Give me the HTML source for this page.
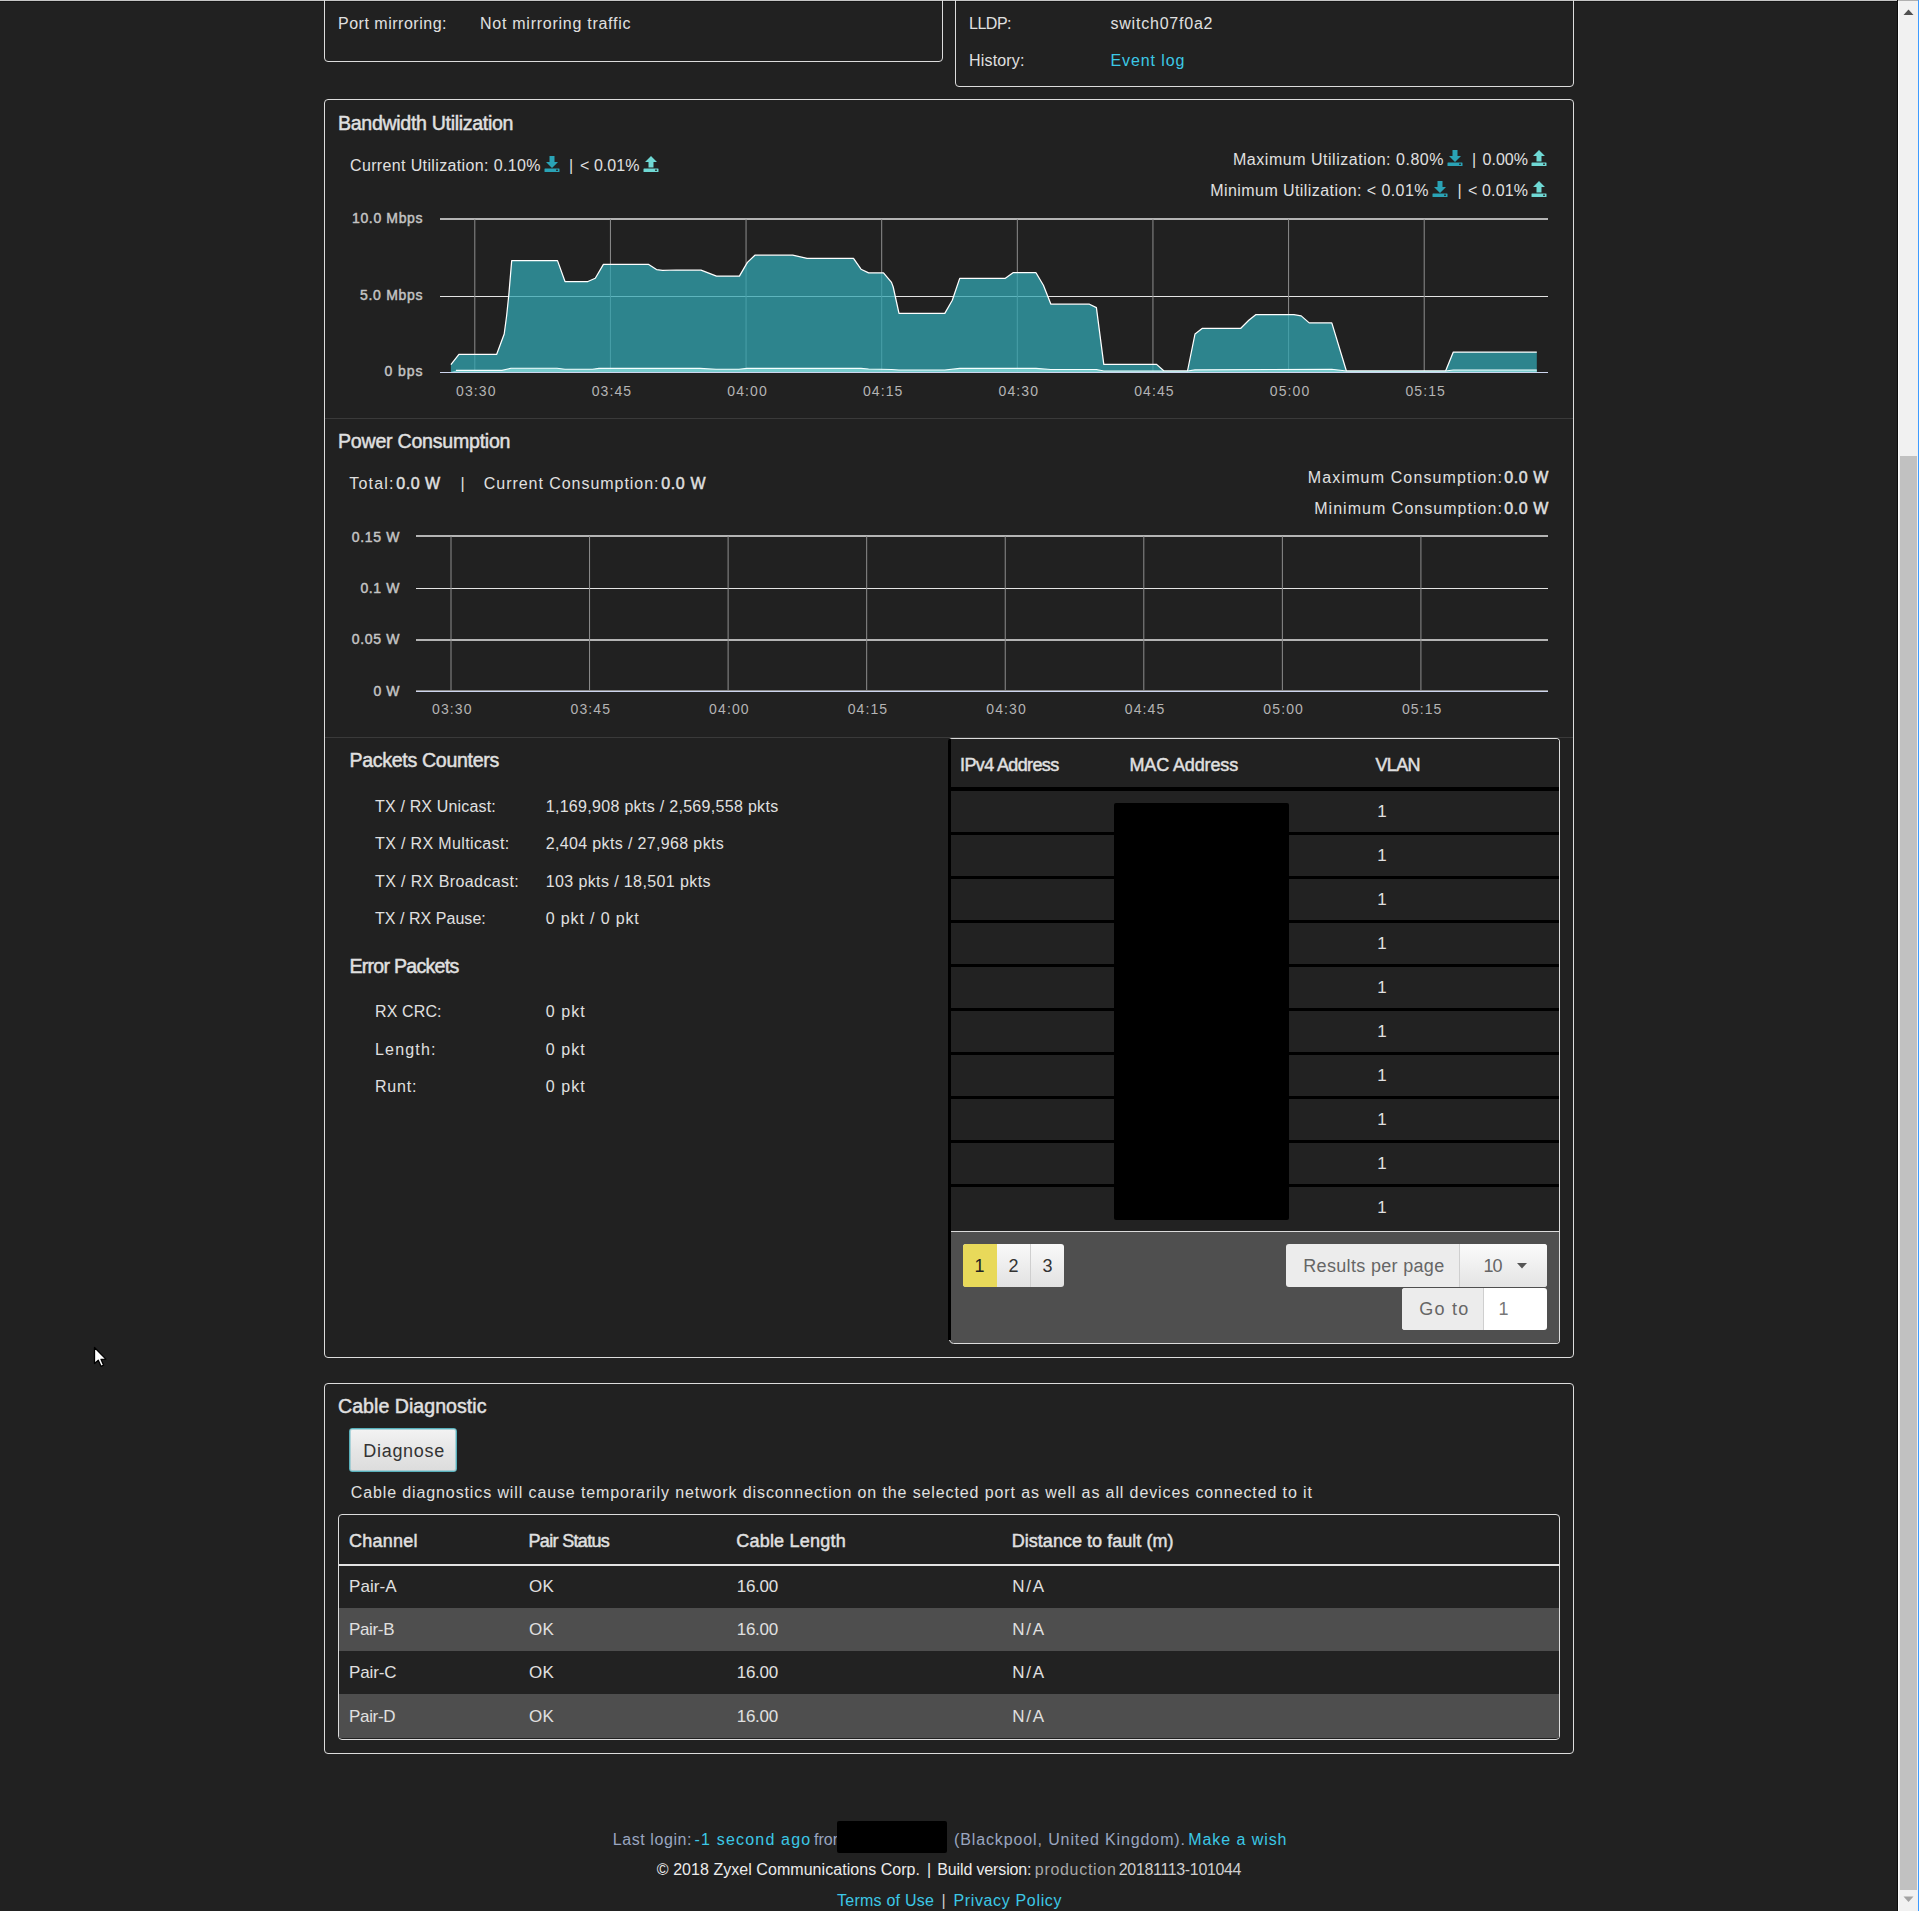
<!DOCTYPE html>
<html><head><meta charset="utf-8"><title>Port Details</title>
<style>
html,body{margin:0;padding:0;}
body{width:1919px;height:1911px;overflow:hidden;background:#212121;position:relative;font-family:"Liberation Sans",sans-serif;}
.abs{position:absolute;}
.t{position:absolute;white-space:pre;line-height:1;}
.panel{position:absolute;box-sizing:border-box;border:1px solid #dcdcdc;border-radius:4px;}
</style></head><body>
<div class=abs style="left:0;top:0;width:1898px;height:1px;background:#c6c6c6"></div>
<div class=abs style="left:0;top:1px;width:1898px;height:1px;background:#161616"></div>
<div class=panel style="left:324px;top:-40px;width:619px;height:102px"></div>
<div class=panel style="left:955px;top:-40px;width:619px;height:127px"></div>
<div class=panel style="left:324px;top:99px;width:1250px;height:1259px"></div>
<div class=abs style="left:325px;top:418px;width:1248px;height:1px;background:#3a3a3a"></div>
<div class=abs style="left:325px;top:737px;width:1248px;height:1px;background:#3a3a3a"></div>
<svg class=abs style="left:0;top:0" width="1919" height="740" viewBox="0 0 1919 740">
<rect x="440" y="218" width="1108" height="2" fill="#b4b4b4"/>
<rect x="440" y="296" width="1108" height="1" fill="#e4e4e4"/>
<g stroke="#8e8e8e" stroke-width="1">
<line x1="474.80" y1="219" x2="474.80" y2="372"/><line x1="610.43" y1="219" x2="610.43" y2="372"/><line x1="746.06" y1="219" x2="746.06" y2="372"/><line x1="881.69" y1="219" x2="881.69" y2="372"/><line x1="1017.32" y1="219" x2="1017.32" y2="372"/><line x1="1152.95" y1="219" x2="1152.95" y2="372"/><line x1="1288.58" y1="219" x2="1288.58" y2="372"/><line x1="1424.21" y1="219" x2="1424.21" y2="372"/>
</g>
<path d="M450.9,372.0 L450.9,364.6 L458.9,354.3 L496.7,354.3 L504.2,334.0 L506.6,316.0 L508.8,295.0 L511.7,260.6 L557.5,260.6 L565.0,281.5 L587.9,281.5 L595.3,278.2 L603.4,264.4 L648.7,264.4 L656.5,269.6 L662.6,270.4 L676.4,270.0 L701.0,270.2 L716.5,276.1 L739.4,276.1 L747.4,262.4 L754.9,255.2 L792.7,255.2 L807.1,258.3 L853.5,258.3 L861.0,269.2 L868.6,272.9 L883.5,272.9 L891.5,282.4 L893.2,287.0 L899.0,313.4 L944.8,313.4 L952.3,300.2 L959.7,278.4 L1005.0,278.4 L1013.0,272.7 L1036.0,272.7 L1043.4,285.3 L1050.9,304.2 L1089.5,304.2 L1096.4,307.6 L1103.8,364.4 L1156.6,364.4 L1164.0,371.0 L1187.5,371.0 L1195.0,334.0 L1202.4,328.3 L1240.8,328.3 L1248.8,320.3 L1255.7,314.7 L1293.9,314.7 L1301.2,315.9 L1309.2,322.9 L1331.8,322.9 L1346.4,371.0 L1445.6,371.0 L1453.3,352.0 L1536.8,352.0 L1536.8,372.0 Z" fill="#31a5b1" fill-opacity="0.75"/>
<path d="M450.9,364.6 L458.9,354.3 L496.7,354.3 L504.2,334.0 L506.6,316.0 L508.8,295.0 L511.7,260.6 L557.5,260.6 L565.0,281.5 L587.9,281.5 L595.3,278.2 L603.4,264.4 L648.7,264.4 L656.5,269.6 L662.6,270.4 L676.4,270.0 L701.0,270.2 L716.5,276.1 L739.4,276.1 L747.4,262.4 L754.9,255.2 L792.7,255.2 L807.1,258.3 L853.5,258.3 L861.0,269.2 L868.6,272.9 L883.5,272.9 L891.5,282.4 L893.2,287.0 L899.0,313.4 L944.8,313.4 L952.3,300.2 L959.7,278.4 L1005.0,278.4 L1013.0,272.7 L1036.0,272.7 L1043.4,285.3 L1050.9,304.2 L1089.5,304.2 L1096.4,307.6 L1103.8,364.4 L1156.6,364.4 L1164.0,371.0 L1187.5,371.0 L1195.0,334.0 L1202.4,328.3 L1240.8,328.3 L1248.8,320.3 L1255.7,314.7 L1293.9,314.7 L1301.2,315.9 L1309.2,322.9 L1331.8,322.9 L1346.4,371.0 L1445.6,371.0 L1453.3,352.0 L1536.8,352.0" fill="none" stroke="#ffffff" stroke-width="1.25" stroke-linejoin="round"/>
<path d="M450.9,372.0 L456.0,370.4 L502.0,370.4 L511.0,368.2 L557.0,368.2 L565.0,369.2 L592.5,369.2 L599.0,368.4 L700.0,368.4 L716.0,369.2 L739.0,369.2 L747.0,368.4 L861.0,368.4 L868.6,369.0 L891.5,369.5 L899.0,370.0 L944.8,370.0 L959.7,368.4 L1036.0,368.4 L1050.9,369.5 L1096.4,369.5 L1103.8,371.0 L1187.5,371.0 L1195.0,369.9 L1331.8,369.3 L1346.4,371.0 L1445.6,371.0 L1453.3,370.0 L1536.8,370.0 L1536.8,372.0 Z" fill="#7fd3d3" fill-opacity="0.9"/>
<path d="M456.0,370.4 L502.0,370.4 L511.0,368.2 L557.0,368.2 L565.0,369.2 L592.5,369.2 L599.0,368.4 L700.0,368.4 L716.0,369.2 L739.0,369.2 L747.0,368.4 L861.0,368.4 L868.6,369.0 L891.5,369.5 L899.0,370.0 L944.8,370.0 L959.7,368.4 L1036.0,368.4 L1050.9,369.5 L1096.4,369.5 L1103.8,371.0 L1187.5,371.0 L1195.0,369.9 L1331.8,369.3 L1346.4,371.0 L1445.6,371.0 L1453.3,370.0 L1536.8,370.0" fill="none" stroke="#f4ffff" stroke-width="1.1"/>
<rect x="440" y="372" width="1108" height="1" fill="#cdd5ee"/>
<rect x="416" y="535" width="1132" height="2" fill="#b4b4b4"/>
<rect x="416" y="588" width="1132" height="1" fill="#e4e4e4"/>
<rect x="416" y="639" width="1132" height="2" fill="#b4b4b4"/>
<g stroke="#8e8e8e" stroke-width="1">
<line x1="451.00" y1="536" x2="451.00" y2="690"/><line x1="589.56" y1="536" x2="589.56" y2="690"/><line x1="728.12" y1="536" x2="728.12" y2="690"/><line x1="866.68" y1="536" x2="866.68" y2="690"/><line x1="1005.24" y1="536" x2="1005.24" y2="690"/><line x1="1143.80" y1="536" x2="1143.80" y2="690"/><line x1="1282.36" y1="536" x2="1282.36" y2="690"/><line x1="1420.92" y1="536" x2="1420.92" y2="690"/>
</g>
<rect x="416" y="690" width="1132" height="1" fill="#8a8a8a"/>
<rect x="416" y="691" width="1132" height="1" fill="#cdd5ee"/>
</svg>
<svg class=abs style="left:544px;top:156px" width="16" height="16" viewBox="0 0 16 16"><path d="M5.5 0 H10.5 V6 H14 L8 12 L2 6 H5.5 Z" fill="#2aa3b6"/><rect x="0.5" y="12.5" width="15" height="3.5" rx="0.5" fill="#2aa3b6"/><rect x="12" y="13.6" width="2" height="1.2" fill="#212121"/></svg><svg class=abs style="left:643px;top:156px" width="16" height="16" viewBox="0 0 16 16"><path d="M8 0 L14 6 H10.5 V11.5 H5.5 V6 H2 Z" fill="#6fd8d4"/><rect x="0.5" y="12.5" width="15" height="3.5" rx="0.5" fill="#6fd8d4"/><rect x="12" y="13.6" width="2" height="1.2" fill="#212121"/></svg><svg class=abs style="left:1447px;top:150px" width="16" height="16" viewBox="0 0 16 16"><path d="M5.5 0 H10.5 V6 H14 L8 12 L2 6 H5.5 Z" fill="#2aa3b6"/><rect x="0.5" y="12.5" width="15" height="3.5" rx="0.5" fill="#2aa3b6"/><rect x="12" y="13.6" width="2" height="1.2" fill="#212121"/></svg><svg class=abs style="left:1531px;top:150px" width="16" height="16" viewBox="0 0 16 16"><path d="M8 0 L14 6 H10.5 V11.5 H5.5 V6 H2 Z" fill="#6fd8d4"/><rect x="0.5" y="12.5" width="15" height="3.5" rx="0.5" fill="#6fd8d4"/><rect x="12" y="13.6" width="2" height="1.2" fill="#212121"/></svg><svg class=abs style="left:1432px;top:181px" width="16" height="16" viewBox="0 0 16 16"><path d="M5.5 0 H10.5 V6 H14 L8 12 L2 6 H5.5 Z" fill="#2aa3b6"/><rect x="0.5" y="12.5" width="15" height="3.5" rx="0.5" fill="#2aa3b6"/><rect x="12" y="13.6" width="2" height="1.2" fill="#212121"/></svg><svg class=abs style="left:1531px;top:181px" width="16" height="16" viewBox="0 0 16 16"><path d="M8 0 L14 6 H10.5 V11.5 H5.5 V6 H2 Z" fill="#6fd8d4"/><rect x="0.5" y="12.5" width="15" height="3.5" rx="0.5" fill="#6fd8d4"/><rect x="12" y="13.6" width="2" height="1.2" fill="#212121"/></svg>
<!-- ARP table -->
<div class=abs style="left:948px;top:738px;width:612px;height:606px;box-sizing:border-box;border:1px solid #dcdcdc;border-left:3px solid #000;border-radius:4px;background:#000"></div>
<div class=abs style="left:951px;top:739px;width:608px;height:48px;border-radius:0 3px 0 0;background:#212121"></div>
<div class=abs style="left:951px;top:791px;width:608px;height:41px;background:#222"></div><div class=abs style="left:951px;top:835px;width:608px;height:41px;background:#222"></div><div class=abs style="left:951px;top:879px;width:608px;height:41px;background:#222"></div><div class=abs style="left:951px;top:923px;width:608px;height:41px;background:#222"></div><div class=abs style="left:951px;top:967px;width:608px;height:41px;background:#222"></div><div class=abs style="left:951px;top:1011px;width:608px;height:41px;background:#222"></div><div class=abs style="left:951px;top:1055px;width:608px;height:41px;background:#222"></div><div class=abs style="left:951px;top:1099px;width:608px;height:41px;background:#222"></div><div class=abs style="left:951px;top:1143px;width:608px;height:41px;background:#222"></div><div class=abs style="left:951px;top:1187px;width:608px;height:44px;background:#222"></div>
<div class=abs style="left:951px;top:1231px;width:608px;height:1px;background:#dcdcdc"></div>
<div class=abs style="left:951px;top:1232px;width:608px;height:111px;background:#4f4f4f;border-radius:0 0 3px 0"></div>
<div class=abs style="left:1114px;top:803px;width:175px;height:417px;background:#000;border-radius:2px"></div>
<svg class=abs style="left:946px;top:1334px" width="12" height="12" viewBox="0 0 12 12"><rect x="0" y="0" width="12" height="12" fill="#212121"/><rect x="2" y="0" width="3" height="6" fill="#000"/><path d="M5 0 H12 V9 H7.5 Q4.6 9 3.6 6.2 V6 H5 Z" fill="#4f4f4f"/><path d="M3.4 6 Q4.4 9.5 7.5 9.5 H12" fill="none" stroke="#dcdcdc" stroke-width="1"/></svg>
<!-- pagination -->
<div class=abs style="left:963px;top:1244px;width:101px;height:43px;border-radius:3px;overflow:hidden;background:linear-gradient(#f9f9f9,#e2e2e2)">
  <div class=abs style="left:0;top:0;width:34px;height:43px;background:#e8d95a"></div>
  <div class=abs style="left:67px;top:0;width:1px;height:43px;background:#cfcfcf"></div>
</div>
<div class=abs style="left:1286px;top:1244px;width:261px;height:43px;border-radius:3px;overflow:hidden;background:#ececec">
  <div class=abs style="left:173px;top:0;width:88px;height:43px;background:linear-gradient(#fbfbfb,#e4e4e4);border-left:1px solid #cfcfcf"></div>
</div>
<svg class=abs style="left:1517px;top:1263px" width="10" height="6" viewBox="0 0 10 6"><path d="M0 0 H10 L5 5.5 Z" fill="#555"/></svg>
<div class=abs style="left:1402px;top:1288px;width:145px;height:42px;border-radius:3px;overflow:hidden;background:#fff">
  <div class=abs style="left:0;top:0;width:81px;height:42px;background:#ececec;border-right:1px solid #cfcfcf"></div>
</div>
<!-- cable panel -->
<div class=panel style="left:324px;top:1383px;width:1250px;height:371px"></div>
<div class=abs style="left:349px;top:1428px;width:108px;height:44px;box-sizing:border-box;border:1px solid #58b0bb;box-shadow:inset 0 0 0 1px rgba(120,190,200,0.55);border-radius:3px;background:linear-gradient(#f3f3f3,#e6e6e6 50%,#dcdcdc)"></div>
<div class=abs style="left:338px;top:1514px;width:1222px;height:226px;box-sizing:border-box;border:1px solid #dcdcdc;border-radius:4px;overflow:hidden;background:#212121">
</div>
<div class=abs style="left:339px;top:1564px;width:1220px;height:2px;background:#e2e2e2"></div>
<div class=abs style="left:339px;top:1566px;width:1220px;height:42px;background:#222"></div><div class=abs style="left:339px;top:1608px;width:1220px;height:43px;background:#4e4e4e"></div><div class=abs style="left:339px;top:1651px;width:1220px;height:43px;background:#222"></div><div class=abs style="left:339px;top:1694px;width:1220px;height:44px;background:#4e4e4e"></div>
<!-- footer redaction -->
<span class=t style="top:16.46px;font-size:16px;color:#e0e0e0;letter-spacing:0.510px;left:338.00px;">Port mirroring:</span><span class=t style="top:16.46px;font-size:16px;color:#e0e0e0;letter-spacing:0.738px;left:480.00px;">Not mirroring traffic</span><span class=t style="top:16.46px;font-size:16px;color:#e0e0e0;letter-spacing:-0.492px;left:969.00px;">LLDP:</span><span class=t style="top:16.46px;font-size:16px;color:#e0e0e0;letter-spacing:0.783px;left:1110.50px;">switch07f0a2</span><span class=t style="top:53.46px;font-size:16px;color:#e0e0e0;letter-spacing:0.181px;left:969.00px;">History:</span><span class=t style="top:53.46px;font-size:16px;color:#3cc8e6;letter-spacing:0.910px;left:1110.50px;">Event log</span><span class=t style="top:114.41px;font-size:19.6px;color:#e0e0e0;-webkit-text-stroke:0.45px #e0e0e0;letter-spacing:-0.320px;left:338.00px;">Bandwidth Utilization</span><span class=t style="top:158.46px;font-size:16px;color:#e0e0e0;letter-spacing:0.363px;left:350.00px;">Current Utilization: 0.10%</span><span class=t style="top:158.46px;font-size:16px;color:#e0e0e0;left:569.00px;">|</span><span class=t style="top:158.46px;font-size:16px;color:#e0e0e0;letter-spacing:0.057px;left:580.00px;">&lt; 0.01%</span><span class=t style="top:152.26px;font-size:16px;color:#e0e0e0;letter-spacing:0.524px;left:1233.00px;">Maximum Utilization: 0.80%</span><span class=t style="top:152.26px;font-size:16px;color:#e0e0e0;left:1472.00px;">|</span><span class=t style="top:152.26px;font-size:16px;color:#e0e0e0;letter-spacing:0.031px;left:1482.50px;">0.00%</span><span class=t style="top:183.46px;font-size:16px;color:#e0e0e0;letter-spacing:0.424px;left:1210.30px;">Minimum Utilization: &lt; 0.01%</span><span class=t style="top:183.46px;font-size:16px;color:#e0e0e0;left:1457.50px;">|</span><span class=t style="top:183.46px;font-size:16px;color:#e0e0e0;letter-spacing:0.141px;left:1468.00px;">&lt; 0.01%</span><span class=t style="top:432.41px;font-size:19.6px;color:#e0e0e0;-webkit-text-stroke:0.45px #e0e0e0;letter-spacing:-0.246px;left:338.00px;">Power Consumption</span><span class=t style="top:476.46px;font-size:16px;color:#e0e0e0;letter-spacing:1.190px;left:349.30px;">Total:</span><span class=t style="top:476.46px;font-size:16px;color:#e0e0e0;-webkit-text-stroke:0.45px #e0e0e0;letter-spacing:0.551px;left:396.20px;">0.0 W</span><span class=t style="top:476.46px;font-size:16px;color:#e0e0e0;left:460.50px;">|</span><span class=t style="top:476.46px;font-size:16px;color:#e0e0e0;letter-spacing:0.957px;left:483.80px;">Current Consumption:</span><span class=t style="top:476.46px;font-size:16px;color:#e0e0e0;-webkit-text-stroke:0.45px #e0e0e0;letter-spacing:0.626px;left:661.20px;">0.0 W</span><span class=t style="top:469.86px;font-size:16px;color:#e0e0e0;letter-spacing:1.137px;left:1307.80px;">Maximum Consumption:</span><span class=t style="top:469.86px;font-size:16px;color:#e0e0e0;-webkit-text-stroke:0.45px #e0e0e0;letter-spacing:0.576px;left:1504.20px;">0.0 W</span><span class=t style="top:500.86px;font-size:16px;color:#e0e0e0;letter-spacing:1.034px;left:1314.20px;">Minimum Consumption:</span><span class=t style="top:500.86px;font-size:16px;color:#e0e0e0;-webkit-text-stroke:0.45px #e0e0e0;letter-spacing:0.576px;left:1504.20px;">0.0 W</span><span class=t style="top:750.91px;font-size:19.6px;color:#e0e0e0;-webkit-text-stroke:0.45px #e0e0e0;letter-spacing:-0.330px;left:349.50px;">Packets Counters</span><span class=t style="top:799.16px;font-size:16px;color:#e0e0e0;letter-spacing:0.170px;left:375.00px;">TX / RX Unicast:</span><span class=t style="top:799.16px;font-size:16px;color:#e0e0e0;letter-spacing:0.307px;left:545.70px;">1,169,908 pkts / 2,569,558 pkts</span><span class=t style="top:835.76px;font-size:16px;color:#e0e0e0;letter-spacing:0.363px;left:375.00px;">TX / RX Multicast:</span><span class=t style="top:835.76px;font-size:16px;color:#e0e0e0;letter-spacing:0.357px;left:545.70px;">2,404 pkts / 27,968 pkts</span><span class=t style="top:873.76px;font-size:16px;color:#e0e0e0;letter-spacing:0.404px;left:375.00px;">TX / RX Broadcast:</span><span class=t style="top:873.76px;font-size:16px;color:#e0e0e0;letter-spacing:0.393px;left:545.70px;">103 pkts / 18,501 pkts</span><span class=t style="top:910.76px;font-size:16px;color:#e0e0e0;letter-spacing:0.041px;left:375.00px;">TX / RX Pause:</span><span class=t style="top:910.76px;font-size:16px;color:#e0e0e0;letter-spacing:0.865px;left:545.70px;">0 pkt / 0 pkt</span><span class=t style="top:956.91px;font-size:19.6px;color:#e0e0e0;-webkit-text-stroke:0.45px #e0e0e0;letter-spacing:-0.749px;left:349.50px;">Error Packets</span><span class=t style="top:1003.76px;font-size:16px;color:#e0e0e0;letter-spacing:0.120px;left:375.00px;">RX CRC:</span><span class=t style="top:1003.76px;font-size:16px;color:#e0e0e0;letter-spacing:1.103px;left:545.70px;">0 pkt</span><span class=t style="top:1042.06px;font-size:16px;color:#e0e0e0;letter-spacing:1.185px;left:375.00px;">Length:</span><span class=t style="top:1042.06px;font-size:16px;color:#e0e0e0;letter-spacing:1.103px;left:545.70px;">0 pkt</span><span class=t style="top:1078.76px;font-size:16px;color:#e0e0e0;letter-spacing:0.812px;left:375.00px;">Runt:</span><span class=t style="top:1078.76px;font-size:16px;color:#e0e0e0;letter-spacing:1.103px;left:545.70px;">0 pkt</span><span class=t style="top:755.76px;font-size:18px;color:#e0e0e0;-webkit-text-stroke:0.45px #e0e0e0;letter-spacing:-0.624px;left:960.00px;">IPv4 Address</span><span class=t style="top:755.76px;font-size:18px;color:#e0e0e0;-webkit-text-stroke:0.45px #e0e0e0;letter-spacing:-0.135px;left:1129.50px;">MAC Address</span><span class=t style="top:755.76px;font-size:18px;color:#e0e0e0;-webkit-text-stroke:0.45px #e0e0e0;letter-spacing:-0.677px;left:1375.50px;">VLAN</span><span class=t style="top:802.91px;font-size:17px;color:#e0e0e0;left:1377.20px;">1</span><span class=t style="top:846.91px;font-size:17px;color:#e0e0e0;left:1377.20px;">1</span><span class=t style="top:890.91px;font-size:17px;color:#e0e0e0;left:1377.20px;">1</span><span class=t style="top:934.91px;font-size:17px;color:#e0e0e0;left:1377.20px;">1</span><span class=t style="top:978.91px;font-size:17px;color:#e0e0e0;left:1377.20px;">1</span><span class=t style="top:1022.91px;font-size:17px;color:#e0e0e0;left:1377.20px;">1</span><span class=t style="top:1066.91px;font-size:17px;color:#e0e0e0;left:1377.20px;">1</span><span class=t style="top:1110.91px;font-size:17px;color:#e0e0e0;left:1377.20px;">1</span><span class=t style="top:1154.91px;font-size:17px;color:#e0e0e0;left:1377.20px;">1</span><span class=t style="top:1198.91px;font-size:17px;color:#e0e0e0;left:1377.20px;">1</span><span class=t style="top:1257.36px;font-size:18px;color:#222;left:974.50px;">1</span><span class=t style="top:1257.36px;font-size:18px;color:#333;left:1008.50px;">2</span><span class=t style="top:1257.36px;font-size:18px;color:#333;left:1042.50px;">3</span><span class=t style="top:1256.56px;font-size:18px;color:#666;letter-spacing:0.320px;left:1303.30px;">Results per page</span><span class=t style="top:1256.56px;font-size:18px;color:#666;letter-spacing:-1.031px;left:1483.50px;">10</span><span class=t style="top:1299.96px;font-size:18px;color:#666;letter-spacing:1.242px;left:1419.30px;">Go to</span><span class=t style="top:1299.96px;font-size:18px;color:#777;left:1498.50px;">1</span><span class=t style="top:1397.41px;font-size:19.6px;color:#e0e0e0;-webkit-text-stroke:0.45px #e0e0e0;letter-spacing:0.025px;left:338.00px;">Cable Diagnostic</span><span class=t style="top:1442.06px;font-size:18px;color:#333;letter-spacing:0.691px;left:363.30px;">Diagnose</span><span class=t style="top:1484.76px;font-size:16px;color:#e0e0e0;letter-spacing:0.888px;left:350.70px;">Cable diagnostics will cause temporarily network disconnection on the selected port as well as all devices connected to it</span><span class=t style="top:1531.76px;font-size:18px;color:#e0e0e0;-webkit-text-stroke:0.45px #e0e0e0;letter-spacing:0.240px;left:349.00px;">Channel</span><span class=t style="top:1531.76px;font-size:18px;color:#e0e0e0;-webkit-text-stroke:0.45px #e0e0e0;letter-spacing:-0.675px;left:528.50px;">Pair Status</span><span class=t style="top:1531.76px;font-size:18px;color:#e0e0e0;-webkit-text-stroke:0.45px #e0e0e0;letter-spacing:0.228px;left:736.20px;">Cable Length</span><span class=t style="top:1531.76px;font-size:18px;color:#e0e0e0;-webkit-text-stroke:0.45px #e0e0e0;letter-spacing:0.037px;left:1011.70px;">Distance to fault (m)</span><span class=t style="top:1578.31px;font-size:17px;color:#e0e0e0;letter-spacing:0.053px;left:349.00px;">Pair-A</span><span class=t style="top:1578.31px;font-size:17px;color:#e0e0e0;letter-spacing:0.237px;left:529.00px;">OK</span><span class=t style="top:1578.31px;font-size:17px;color:#e0e0e0;letter-spacing:-0.262px;left:736.70px;">16.00</span><span class=t style="top:1578.31px;font-size:17px;color:#e0e0e0;letter-spacing:1.728px;left:1012.20px;">N/A</span><span class=t style="top:1620.91px;font-size:17px;color:#e0e0e0;letter-spacing:-0.347px;left:349.00px;">Pair-B</span><span class=t style="top:1620.91px;font-size:17px;color:#e0e0e0;letter-spacing:0.237px;left:529.00px;">OK</span><span class=t style="top:1620.91px;font-size:17px;color:#e0e0e0;letter-spacing:-0.262px;left:736.70px;">16.00</span><span class=t style="top:1620.91px;font-size:17px;color:#e0e0e0;letter-spacing:1.728px;left:1012.20px;">N/A</span><span class=t style="top:1663.91px;font-size:17px;color:#e0e0e0;letter-spacing:-0.134px;left:349.00px;">Pair-C</span><span class=t style="top:1663.91px;font-size:17px;color:#e0e0e0;letter-spacing:0.237px;left:529.00px;">OK</span><span class=t style="top:1663.91px;font-size:17px;color:#e0e0e0;letter-spacing:-0.262px;left:736.70px;">16.00</span><span class=t style="top:1663.91px;font-size:17px;color:#e0e0e0;letter-spacing:1.728px;left:1012.20px;">N/A</span><span class=t style="top:1707.51px;font-size:17px;color:#e0e0e0;letter-spacing:-0.334px;left:349.00px;">Pair-D</span><span class=t style="top:1707.51px;font-size:17px;color:#e0e0e0;letter-spacing:0.237px;left:529.00px;">OK</span><span class=t style="top:1707.51px;font-size:17px;color:#e0e0e0;letter-spacing:-0.262px;left:736.70px;">16.00</span><span class=t style="top:1707.51px;font-size:17px;color:#e0e0e0;letter-spacing:1.728px;left:1012.20px;">N/A</span><span class=t style="top:1831.96px;font-size:16px;color:#9aa6c0;letter-spacing:0.576px;left:612.80px;">Last login:</span><span class=t style="top:1831.96px;font-size:16px;color:#3cc8e6;letter-spacing:1.191px;left:694.50px;">-1 second ago</span><span class=t style="top:1831.96px;font-size:16px;color:#9aa6c0;left:814.00px;">from</span><span class=t style="top:1831.96px;font-size:16px;color:#9aa6c0;letter-spacing:0.881px;left:954.00px;">(Blackpool, United Kingdom).</span><span class=t style="top:1831.96px;font-size:16px;color:#3cc8e6;letter-spacing:0.938px;left:1188.20px;">Make a wish</span><span class=t style="top:1861.66px;font-size:16px;color:#ececec;letter-spacing:0.048px;left:656.80px;">© 2018 Zyxel Communications Corp.</span><span class=t style="top:1861.66px;font-size:16px;color:#ececec;left:927.00px;">|</span><span class=t style="top:1861.66px;font-size:16px;color:#ececec;letter-spacing:-0.142px;left:937.30px;">Build version:</span><span class=t style="top:1861.66px;font-size:16px;color:#a8a8a8;letter-spacing:0.698px;left:1034.80px;">production</span><span class=t style="top:1861.66px;font-size:16px;color:#cfcfcf;letter-spacing:-0.345px;left:1118.80px;">20181113-101044</span><span class=t style="top:1893.46px;font-size:16px;color:#3cc8e6;letter-spacing:0.241px;left:837.00px;">Terms of Use</span><span class=t style="top:1893.46px;font-size:16px;color:#cccccc;left:941.50px;">|</span><span class=t style="top:1893.46px;font-size:16px;color:#3cc8e6;letter-spacing:0.656px;left:953.40px;">Privacy Policy</span><span class=t style="top:210.65px;font-size:14px;color:#c4c4c4;-webkit-text-stroke:0.45px #c4c4c4;letter-spacing:0.641px;left:352.00px;">10.0 Mbps</span><span class=t style="top:287.65px;font-size:14px;color:#c4c4c4;-webkit-text-stroke:0.45px #c4c4c4;letter-spacing:0.701px;left:360.00px;">5.0 Mbps</span><span class=t style="top:363.65px;font-size:14px;color:#c4c4c4;-webkit-text-stroke:0.45px #c4c4c4;letter-spacing:0.938px;left:384.50px;">0 bps</span><span class=t style="top:383.85px;font-size:14px;color:#b4b4b4;letter-spacing:1.113px;left:456.00px;">03:30</span><span class=t style="top:383.85px;font-size:14px;color:#b4b4b4;letter-spacing:1.113px;left:591.63px;">03:45</span><span class=t style="top:383.85px;font-size:14px;color:#b4b4b4;letter-spacing:1.113px;left:727.26px;">04:00</span><span class=t style="top:383.85px;font-size:14px;color:#b4b4b4;letter-spacing:1.113px;left:862.89px;">04:15</span><span class=t style="top:383.85px;font-size:14px;color:#b4b4b4;letter-spacing:1.113px;left:998.52px;">04:30</span><span class=t style="top:383.85px;font-size:14px;color:#b4b4b4;letter-spacing:1.113px;left:1134.15px;">04:45</span><span class=t style="top:383.85px;font-size:14px;color:#b4b4b4;letter-spacing:1.113px;left:1269.78px;">05:00</span><span class=t style="top:383.85px;font-size:14px;color:#b4b4b4;letter-spacing:1.113px;left:1405.41px;">05:15</span><span class=t style="top:530.15px;font-size:14px;color:#c4c4c4;-webkit-text-stroke:0.45px #c4c4c4;letter-spacing:0.688px;left:351.70px;">0.15 W</span><span class=t style="top:580.85px;font-size:14px;color:#c4c4c4;-webkit-text-stroke:0.45px #c4c4c4;letter-spacing:0.630px;left:360.40px;">0.1 W</span><span class=t style="top:632.45px;font-size:14px;color:#c4c4c4;-webkit-text-stroke:0.45px #c4c4c4;letter-spacing:0.688px;left:351.70px;">0.05 W</span><span class=t style="top:684.15px;font-size:14px;color:#c4c4c4;-webkit-text-stroke:0.45px #c4c4c4;letter-spacing:0.555px;left:373.50px;">0 W</span><span class=t style="top:702.25px;font-size:14px;color:#b4b4b4;letter-spacing:1.113px;left:432.00px;">03:30</span><span class=t style="top:702.25px;font-size:14px;color:#b4b4b4;letter-spacing:1.113px;left:570.56px;">03:45</span><span class=t style="top:702.25px;font-size:14px;color:#b4b4b4;letter-spacing:1.113px;left:709.12px;">04:00</span><span class=t style="top:702.25px;font-size:14px;color:#b4b4b4;letter-spacing:1.113px;left:847.68px;">04:15</span><span class=t style="top:702.25px;font-size:14px;color:#b4b4b4;letter-spacing:1.113px;left:986.24px;">04:30</span><span class=t style="top:702.25px;font-size:14px;color:#b4b4b4;letter-spacing:1.113px;left:1124.80px;">04:45</span><span class=t style="top:702.25px;font-size:14px;color:#b4b4b4;letter-spacing:1.113px;left:1263.36px;">05:00</span><span class=t style="top:702.25px;font-size:14px;color:#b4b4b4;letter-spacing:1.113px;left:1401.92px;">05:15</span>
<div class=abs style="left:837px;top:1821px;width:110px;height:32px;background:#000;border-radius:2px"></div>
<!-- cursor -->
<svg class=abs style="left:93px;top:1346px" width="15" height="23" viewBox="0 0 15 23"><path d="M1.5 1.5 L1.5 17.6 L5.3 14.3 L8 20.3 L10.6 19.2 L8 13.3 L12.9 13.1 Z" fill="#fff" stroke="#000" stroke-width="1.3" stroke-linejoin="round"/></svg>
<!-- scrollbar -->
<div class=abs style="left:1897px;top:0;width:1px;height:1911px;background:#0c0c0c"></div>
<div class=abs style="left:1898px;top:0;width:1px;height:1911px;background:#fdfdfd"></div>
<div class=abs style="left:1899px;top:0;width:19px;height:1911px;background:#f1f1f1"></div>
<div class=abs style="left:1898px;top:0;width:20px;height:1px;background:#b0b0b0"></div>
<div class=abs style="left:1918px;top:0;width:1px;height:1911px;background:#3d9bff"></div>
<div class=abs style="left:1900px;top:456px;width:17px;height:1434px;background:#c1c1c1"></div>
<svg class=abs style="left:1903px;top:9px" width="11" height="7" viewBox="0 0 11 7"><path d="M0.5 6 L5.5 0.5 L10.5 6 Z" fill="#505050"/></svg>
<svg class=abs style="left:1903px;top:1896px" width="11" height="7" viewBox="0 0 11 7"><path d="M0.5 0.5 L10.5 0.5 L5.5 6 Z" fill="#a3a3a3"/></svg>
</body></html>
